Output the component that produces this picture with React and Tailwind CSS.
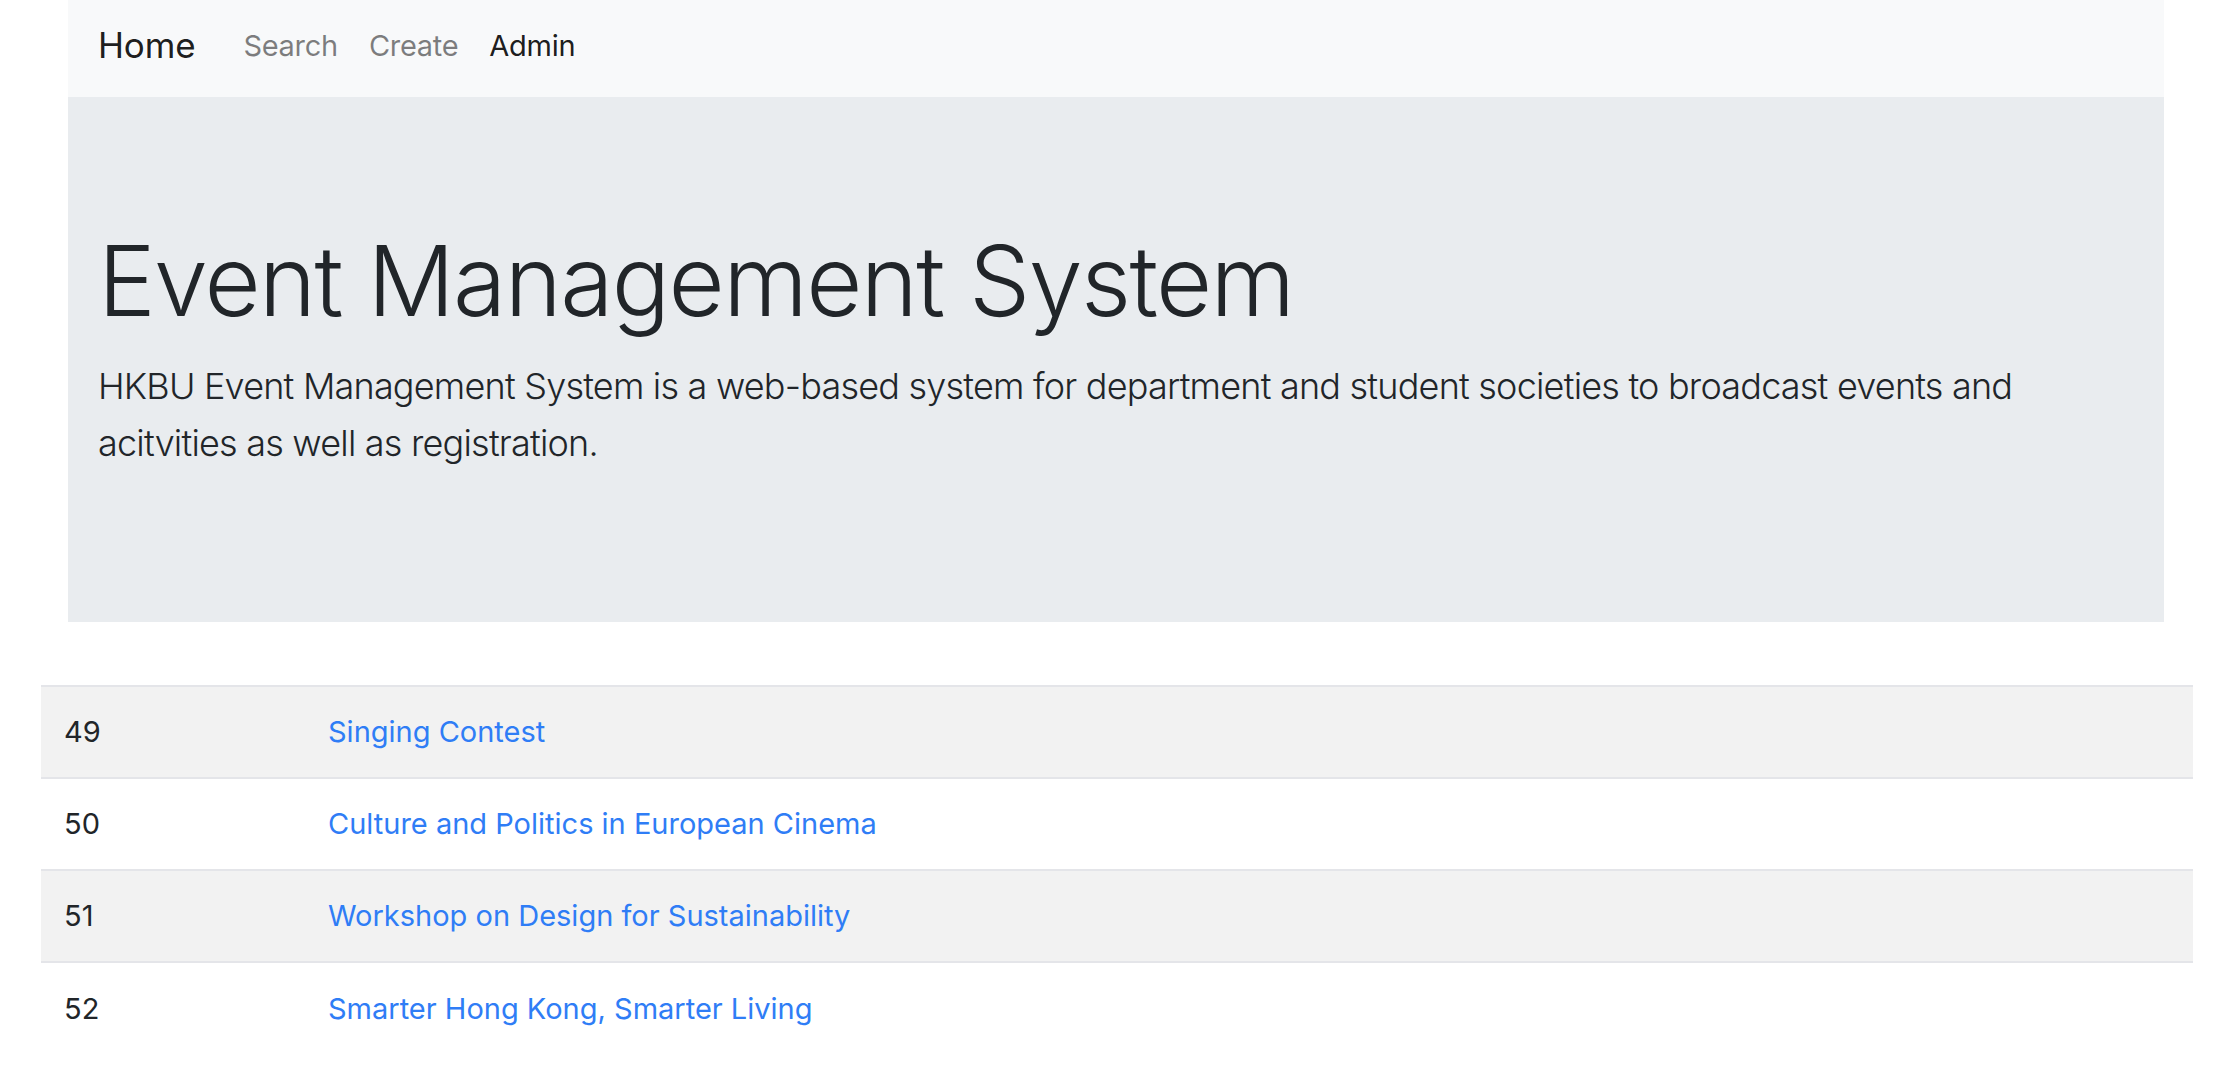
const events = [
  { id: 49, name: 'Singing Contest' },
  { id: 50, name: 'Culture and Politics in European Cinema' },
  { id: 51, name: 'Workshop on Design for Sustainability' },
  { id: 52, name: 'Smarter Hong Kong, Smarter Living' },
];

const App = () => {
  return (
    <div className="min-h-screen bg-white text-[#212529]" style={{ fontFamily: 'Inter, "Noto Sans", sans-serif' }}>
      <nav className="ml-[68px] w-[2096px] h-[97px] bg-[#f8f9fa] flex items-center pl-[30px] pb-[6px]">
        <a href="#" className="text-[35px] tracking-[-0.005em] text-black/90 leading-none">Home</a>
        <div className="flex items-center ml-[48px] gap-[31px] text-[29px] tracking-[-0.01em] leading-none">
          <a href="#" className="text-black/50">Search</a>
          <a href="#" className="text-black/50">Create</a>
          <a href="#" className="text-black/90">Admin</a>
        </div>
      </nav>

      <div className="ml-[68px] w-[2096px] h-[525px] bg-[#e9ecef] pl-[30px] pt-[126px]">
        <h1 className="text-[97px] font-light leading-[1.2] tracking-[-0.017em]">Event Management System</h1>
        <p className="mt-[19px] text-[36px] font-light leading-[1.58] tracking-[-0.022em] max-w-[1960px]">
          HKBU Event Management System is a web-based system for department and student societies to broadcast events and acitvities as well as registration.
        </p>
      </div>

      <table className="ml-[41px] w-[2152px] mt-[63px] border-collapse text-[29px]">
        <tbody>
          {events.map((ev, i) => (
            <tr key={ev.id} className={i % 2 === 0 ? 'bg-[#f2f2f2]' : 'bg-white'}>
              <td className="w-[263px] h-[92px] px-[23px] border-t-2 border-[#e4e5e9] align-middle">{ev.id}</td>
              <td className="h-[92px] px-[24px] border-t-2 border-[#e4e5e9] align-middle">
                <a href="#" className="text-[#2f7df6]">{ev.name}</a>
              </td>
            </tr>
          ))}
        </tbody>
      </table>
    </div>
  );
};

export default App;
